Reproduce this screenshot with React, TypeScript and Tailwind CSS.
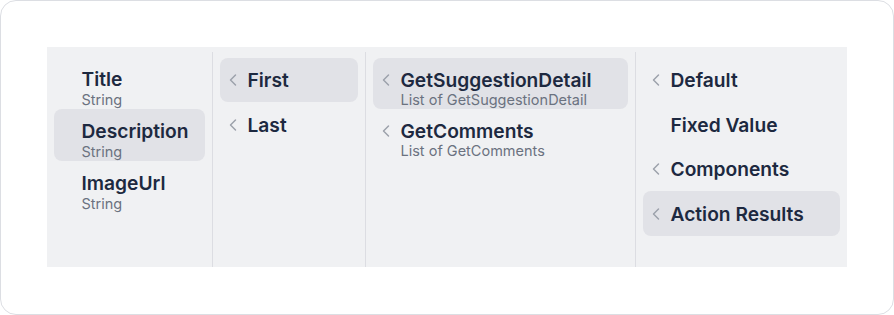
import { ChevronLeft } from 'lucide-react'

type Item = {
  label: string
  sub?: string
  chevron?: boolean
  active?: boolean
}

type Variant = 'field' | 'list' | 'plain'

const fields: Item[] = [
  { label: 'Title', sub: 'String' },
  { label: 'Description', sub: 'String', active: true },
  { label: 'ImageUrl', sub: 'String' },
]

const positions: Item[] = [
  { label: 'First', chevron: true, active: true },
  { label: 'Last', chevron: true },
]

const actions: Item[] = [
  { label: 'GetSuggestionDetail', sub: 'List of GetSuggestionDetail', chevron: true, active: true },
  { label: 'GetComments', sub: 'List of GetComments', chevron: true },
]

const sources: Item[] = [
  { label: 'Default', chevron: true },
  { label: 'Fixed Value' },
  { label: 'Components', chevron: true },
  { label: 'Action Results', chevron: true, active: true },
]

// row sizes per column type, taken off the design
const rowBox: Record<Variant, string> = {
  field: 'h-[52px] pt-[11.5px]',
  list: 'h-[51px] pt-[11px]',
  plain: 'h-[44.5px] pt-[11.5px]',
}

function Row({ item, variant }: { item: Item; variant: Variant }) {
  const twoLine = !!item.sub
  return (
    <div
      className={`flex items-start gap-[5px] rounded-[8px] pl-[3px] pr-2 ${rowBox[variant]} ${
        item.active ? 'bg-[#e1e2e7]' : ''
      }`}
    >
      <div
        className={`flex w-5 shrink-0 items-center justify-center ${
          twoLine ? 'h-[22.5px]' : 'h-[22px]'
        }`}
      >
        {item.chevron && <ChevronLeft size={20} strokeWidth={1.75} className="shrink-0 text-[#9ca1ab]" />}
      </div>
      <div className="flex min-w-0 flex-col">
        <span
          className={`text-[19.2px] font-semibold whitespace-nowrap text-[#1d2940] ${
            twoLine ? 'leading-[22.5px]' : 'leading-[22px]'
          }`}
        >
          {item.label}
        </span>
        {item.sub && (
          <span className="text-[14.5px] leading-[17.5px] whitespace-nowrap text-[#6b7280]">
            {item.sub}
          </span>
        )}
      </div>
    </div>
  )
}

function Column({
  items,
  width,
  variant,
  last,
}: {
  items: Item[]
  width: string
  variant: Variant
  last?: boolean
}) {
  return (
    <div
      className={`flex flex-col px-[7px] ${width} ${variant === 'field' ? 'pt-[5px]' : 'pt-[6px]'} ${
        last ? '' : 'border-r border-[#dcdde2]'
      }`}
    >
      {items.map((it) => (
        <Row key={it.label} item={it} variant={variant} />
      ))}
    </div>
  )
}

export default function App() {
  return (
    <div
      className="h-[315px] w-[894px] bg-white"
      style={{ fontFamily: 'Inter, "Noto Sans", sans-serif' }}
    >
      <div className="h-full w-full rounded-[16px] border-[1.5px] border-[#dcdee3] pt-[45.5px] pl-[45.5px]">
        <div className="flex h-[220px] w-[800px] bg-[#f0f1f3] pt-[5px]">
          <Column items={fields} width="w-[166px]" variant="field" />
          <Column items={positions} width="w-[153px]" variant="plain" />
          <Column items={actions} width="w-[270px]" variant="list" />
          <Column items={sources} width="flex-1" variant="plain" last />
        </div>
      </div>
    </div>
  )
}
